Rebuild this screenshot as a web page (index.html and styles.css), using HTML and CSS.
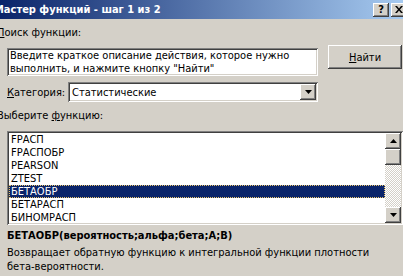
FILE: index.html
```html
<!DOCTYPE html>
<html lang="ru">
  <head>
    <meta charset="UTF-8" />
    <title>Мастер функций - шаг 1 из 2</title>
    <link rel="stylesheet" href="styles.css">
  </head>
  <body>
    <div class="dialog">
      <div class="titlebar">
        <span class="title">Мастер функций - шаг 1 из 2</span>
        <div class="caption-btns">
          <span class="cbtn">?</span>
          <span class="cbtn cbtn-close">
            <svg width="8" height="7" viewBox="0 0 8 7"><path d="M0 0h2l2 2.5L6 0h2L5 3.5 8 7H6L4 4.5 2 7H0l3-3.5z" fill="#000"/></svg>
          </span>
        </div>
      </div>

      <div class="content">
        <div class="label"><u>П</u>оиск функции:</div>

        <div class="search-row">
          <div class="field search-box">Введите краткое описание действия, которое нужно<br>выполнить, и нажмите кнопку "Найти"</div>
          <button class="btn"><u>Н</u>айти</button>
        </div>

        <div class="category-row">
          <span class="inline-label"><u>К</u>атегория:</span>
          <div class="field combo">
            <span class="combo-value">Статистические</span>
            <span class="drop-btn">
              <svg width="7" height="4" viewBox="0 0 7 4"><path d="M0 0h7L3.5 4z" fill="#000"/></svg>
            </span>
          </div>
        </div>

        <div class="label">Выберите <u>ф</u>ункцию:</div>

        <div class="field list">
          <div class="items">
            <div class="item">FРАСП</div>
            <div class="item">FРАСПОБР</div>
            <div class="item">PEARSON</div>
            <div class="item">ZTEST</div>
            <div class="item selected">БЕТАОБР</div>
            <div class="item">БЕТАРАСП</div>
            <div class="item">БИНОМРАСП</div>
          </div>
          <div class="scrollbar">
            <span class="sbtn">
              <svg width="7" height="4" viewBox="0 0 7 4"><path d="M0 4h7L3.5 0z" fill="#000"/></svg>
            </span>
            <span class="sbtn thumb"></span>
            <span class="track"></span>
            <span class="sbtn">
              <svg width="7" height="4" viewBox="0 0 7 4"><path d="M0 0h7L3.5 4z" fill="#000"/></svg>
            </span>
          </div>
        </div>

        <div class="signature">БЕТАОБР(вероятность;альфа;бета;A;B)</div>
        <div class="description">Возвращает обратную функцию к интегральной функции плотности<br>бета-вероятности.</div>
      </div>
    </div>
  </body>
</html>
```

FILE: styles.css
```css
body {
  margin: 0;
  width: 403px;
  height: 276px;
  overflow: hidden;
  background: #d4d0c8;
  font-family: "DejaVu Sans Condensed", "DejaVu Sans", sans-serif;
  font-size: 11px;
  line-height: 13px;
  color: #000;
}

.dialog {
  width: 403px;
}

/* заголовок окна */
.titlebar {
  height: 19px;
  display: flex;
  align-items: center;
  justify-content: space-between;
  background: linear-gradient(to right, #0a246a, #a6caf0);
  color: #fff;
}

.title {
  font-weight: bold;
  margin-left: -6px;
  white-space: nowrap;
}

.caption-btns {
  display: flex;
  gap: 2px;
  margin-right: -4px;
}

.cbtn {
  width: 16px;
  height: 14px;
  box-sizing: border-box;
  display: flex;
  justify-content: center;
  align-items: center;
  background: #d4d0c8;
  color: #000;
  font-weight: bold;
  font-size: 11px;
  box-shadow: inset -1px -1px #404040, inset 1px 1px #fff, inset -2px -2px #808080;
}

.content {
  padding-left: 7px;
}

.label {
  margin-left: -10px;
  margin-top: 7px;
}

/* утопленные поля */
.field {
  background: #fff;
  box-sizing: border-box;
  box-shadow: inset 1px 1px #808080, inset -1px -1px #fff, inset 2px 2px #404040, inset -2px -2px #d4d0c8;
}

.search-row {
  display: flex;
  align-items: flex-start;
  margin-top: 6px;
}

.search-box {
  width: 311px;
  height: 28px;
  margin-top: 3px;
  padding: 1px 0 0 3px;
}

.btn {
  width: 74px;
  height: 24px;
  margin-left: 10px;
  border: none;
  background: #d4d0c8;
  font: inherit;
  color: #000;
  padding: 0;
  box-shadow: inset -1px -1px #404040, inset 1px 1px #fff, inset -2px -2px #808080;
}

.category-row {
  display: flex;
  align-items: center;
  margin-top: 6px;
}

.inline-label {
  width: 61px;
}

.combo {
  width: 250px;
  height: 20px;
  display: flex;
  align-items: center;
  justify-content: space-between;
  padding: 0 2px 0 4px;
}

.drop-btn {
  width: 16px;
  height: 16px;
  box-sizing: border-box;
  display: flex;
  justify-content: center;
  align-items: center;
  background: #d4d0c8;
  box-shadow: inset -1px -1px #404040, inset 1px 1px #fff, inset -2px -2px #808080;
}

.list {
  width: 396px;
  height: 94px;
  margin-top: 9px;
  padding: 2px 2px 2px 2px;
  display: flex;
  overflow: hidden;
}

.items {
  flex: 1;
}

.item {
  height: 13px;
  padding-left: 2px;
  white-space: nowrap;
}

.item.selected {
  background: #0a246a;
  color: #fff;
  outline: 1px dotted #e8c36a;
  outline-offset: -1px;
}

.scrollbar {
  width: 16px;
  display: flex;
  flex-direction: column;
}

.sbtn {
  height: 16px;
  flex-shrink: 0;
  box-sizing: border-box;
  display: flex;
  justify-content: center;
  align-items: center;
  background: #d4d0c8;
  box-shadow: inset -1px -1px #404040, inset 1px 1px #fff, inset -2px -2px #808080;
}

.track {
  flex: 1;
  background: repeating-conic-gradient(#d4d0c8 0 25%, #fff 0 50%) 0 0 / 2px 2px;
}

.signature {
  font-weight: bold;
  margin-top: 4px;
}

.description {
  margin-top: 4px;
  line-height: 14px;
}
```
